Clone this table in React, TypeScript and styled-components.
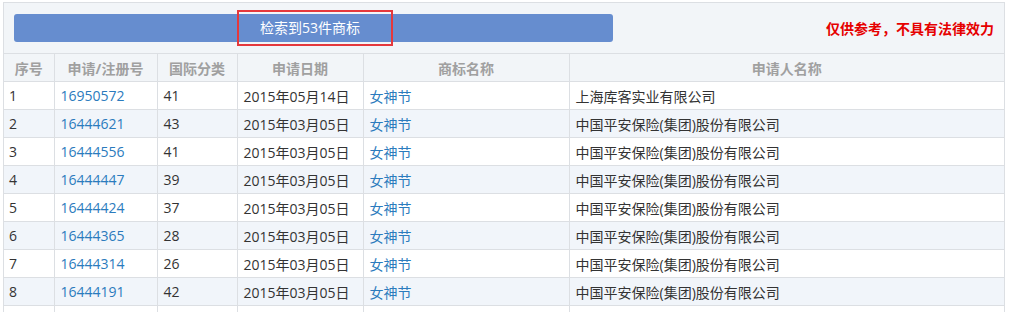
import React from 'react';
import styled, { createGlobalStyle } from 'styled-components';

type Row = { no: string; cls: string; date: string; mark: string; owner: string };

const PINGAN = '中国平安保险(集团)股份有限公司';

const rows: Row[] = [
  { no: '16950572', cls: '41', date: '2015年05月14日', mark: '女神节', owner: '上海库客实业有限公司' },
  { no: '16444621', cls: '43', date: '2015年03月05日', mark: '女神节', owner: PINGAN },
  { no: '16444556', cls: '41', date: '2015年03月05日', mark: '女神节', owner: PINGAN },
  { no: '16444447', cls: '39', date: '2015年03月05日', mark: '女神节', owner: PINGAN },
  { no: '16444424', cls: '37', date: '2015年03月05日', mark: '女神节', owner: PINGAN },
  { no: '16444365', cls: '28', date: '2015年03月05日', mark: '女神节', owner: PINGAN },
  { no: '16444314', cls: '26', date: '2015年03月05日', mark: '女神节', owner: PINGAN },
  { no: '16444191', cls: '42', date: '2015年03月05日', mark: '女神节', owner: PINGAN },
];

const columns = [
  { title: '序号', width: 50 },
  { title: '申请/注册号', width: 103 },
  { title: '国际分类', width: 80 },
  { title: '申请日期', width: 126 },
  { title: '商标名称', width: 206 },
  { title: '申请人名称', width: 435 },
];

export default function App(): JSX.Element {
  return <>
    <GlobalStyle />
    <Panel>
      <Toolbar>
        <ResultBar>
          <ResultText>检索到53件商标</ResultText>
          <Highlight />
        </ResultBar>
        <Disclaimer>仅供参考，不具有法律效力</Disclaimer>
      </Toolbar>
      <Table>
        <colgroup>
          { columns.map(c => <col key={ c.title } style={{ width: c.width }} />) }
        </colgroup>
        <thead>
          <tr>
            { columns.map(c => <HeadCell key={ c.title }>{ c.title }</HeadCell>) }
          </tr>
        </thead>
        <tbody>
          { rows.map((r, i) => (
            <BodyRow key={ r.no } $striped={ i % 2 === 1 }>
              <Cell>{ i + 1 }</Cell>
              <Cell><Link>{ r.no }</Link></Cell>
              <Cell>{ r.cls }</Cell>
              <Cell>{ r.date }</Cell>
              <Cell><Link>{ r.mark }</Link></Cell>
              <Cell>{ r.owner }</Cell>
            </BodyRow>
          )) }
          <BodyRow $striped={ false }>
            { columns.map(c => <Cell key={ c.title } />) }
          </BodyRow>
        </tbody>
      </Table>
    </Panel>
  </>;
}

const GlobalStyle = createGlobalStyle`
  body {
    margin: 0;
    background: #fff;
    font-family: "Open Sans", "Noto Sans CJK SC", sans-serif;
    font-size: 14px;
    color: #333;
  }
`;

const Panel = styled.div`
  margin: 2px 0 0 3px;
  width: 1002px;
  border: 1px solid #dcdfe3;
  border-bottom: none;
  box-sizing: border-box;
`;

const Toolbar = styled.div`
  height: 50px;
  background: #f2f5f8;
  display: flex;
  align-items: center;
  padding: 0 10px 0 10px;
  border-bottom: 1px solid #dcdfe3;
`;

const ResultBar = styled.div`
  position: relative;
  width: 599px;
  height: 28px;
  border-radius: 3px;
  background: #668dcf;
  display: flex;
  align-items: center;
  justify-content: center;
`;

const ResultText = styled.span`
  color: #fff;
  font-size: 14px;
  line-height: 28px;
  margin-right: 7px;
`;

const Highlight = styled.div`
  position: absolute;
  left: 223px;
  top: -4px;
  width: 156px;
  height: 36px;
  border: 2px solid #e5383c;
  box-sizing: border-box;
`;

const Disclaimer = styled.div`
  margin-left: auto;
  color: #e60000;
  font-weight: bold;
  font-size: 14px;
`;

const Table = styled.table`
  width: 100%;
  table-layout: fixed;
  border-collapse: collapse;
`;

const HeadCell = styled.th`
  height: 27px;
  padding: 0;
  background: #f2f5f8;
  color: #a0a0a0;
  font-weight: bold;
  font-size: 14px;
  text-align: center;
  border-left: 1px solid #dcdfe3;
  border-bottom: 1px solid #dcdfe3;
  &:first-child { border-left: none; }
`;

const BodyRow = styled.tr<{ $striped: boolean }>`
  background: ${ p => p.$striped ? '#f1f5fa' : '#fff' };
`;

const Cell = styled.td`
  height: 27px;
  padding: 0 6px;
  white-space: nowrap;
  overflow: hidden;
  border-left: 1px solid #dcdfe3;
  border-bottom: 1px solid #dcdfe3;
  &:first-child { border-left: none; padding-left: 5px; }
`;

const Link = styled.a`
  color: #2b7bbd;
  cursor: pointer;
`;
